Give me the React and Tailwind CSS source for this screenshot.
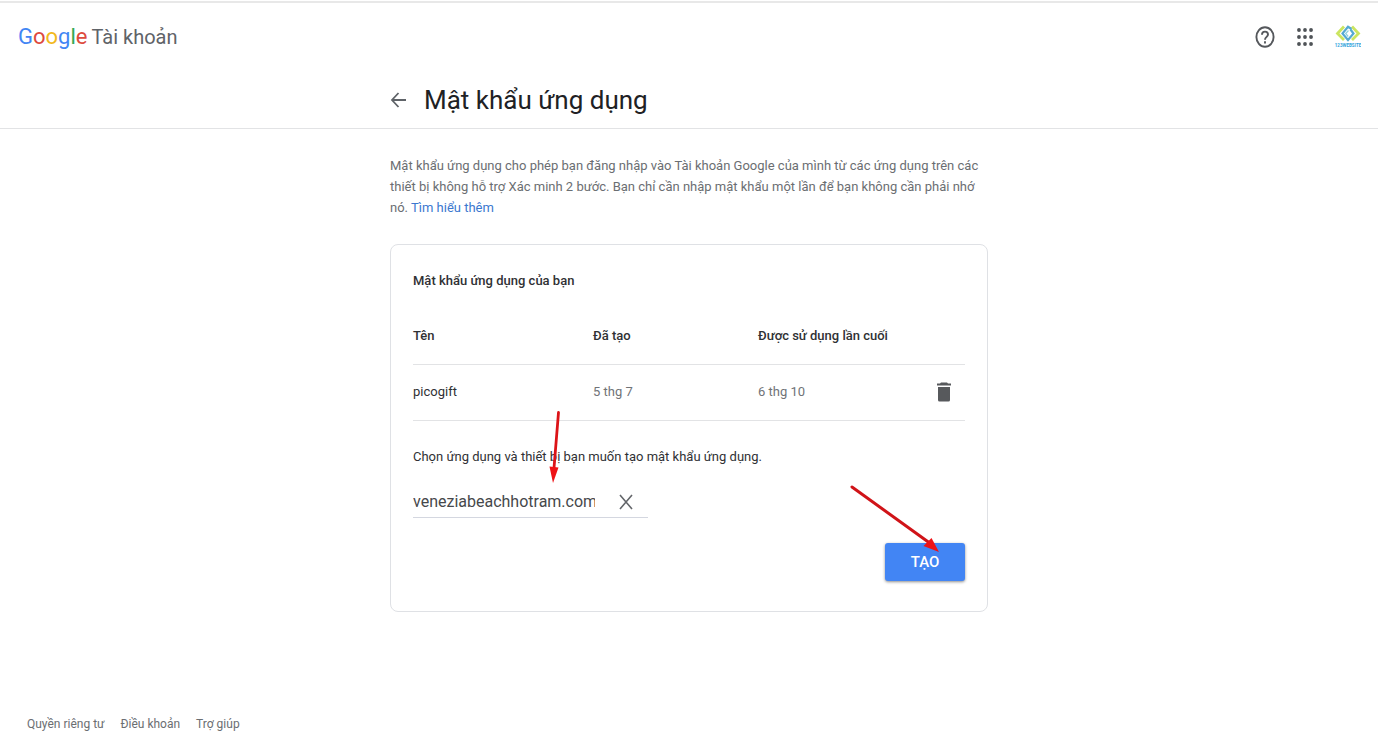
import { useState } from "react";

const passwords = [{ name: "picogift", created: "5 thg 7", lastUsed: "6 thg 10" }];

const dots = [3, 10, 17];

function HelpIcon() {
  return (
    <svg viewBox="0 0 20 22" className="h-[22px] w-5" fill="none" stroke="#55585c" strokeWidth="1.9">
      <ellipse cx="10" cy="11" rx="8.6" ry="9.8" />
      <path d="M7 8.8c0-2 1.3-3.2 3-3.2s3 1.2 3 2.9c0 2.3-3 2.5-3 5.2" />
      <path d="M10 15.2v2.2" />
    </svg>
  );
}

function AppsIcon() {
  return (
    <svg viewBox="0 0 20 20" className="h-5 w-5" fill="#4f5357">
      {dots.map((y) => dots.map((x) => <circle key={`${x}-${y}`} cx={x * 0.86 + 1.4} cy={y} r="1.9" />))}
    </svg>
  );
}

function AvatarLogo() {
  return (
    <svg viewBox="0 0 26 24" className="h-6 w-[26px]" fill="none">
      <path d="M9 1.500 2.500 8.500 9 15M17 1.500 23.500 8.500 17 15" stroke="#cbe560" strokeWidth="2.800" />
      <path d="M16.500 4 13 1.800 7.500 8.500 13 15l5.500-6.500-3-4" stroke="#55aad2" strokeWidth="2.200" />
      <path d="m13.500 5.500-2.800 3 2.500 3" stroke="#8ed0dd" strokeWidth="1.200" />
      <text x="13" y="21.500" textAnchor="middle" fontSize="4.500" fontWeight="700" fill="#35a5dc" fontFamily="Roboto, sans-serif">
        123WEBSITE
      </text>
    </svg>
  );
}

export default function App() {
  const [appName, setAppName] = useState("veneziabeachhotram.com");

  return (
    <div className="flex min-h-screen flex-col bg-white pt-px font-[Roboto,'Liberation_Sans',sans-serif] text-[13px] leading-5 text-[#303134]">
      {/* Header */}
      <header className="border-t-2 border-b border-t-[#e8e8e8] border-b-[#e2e3e5]">
        <div className="flex h-[68px] items-center justify-between pr-[17px] pl-[18px]">
          <a href="#" className="flex items-baseline gap-1">
            <span className="text-[22px]">
              <span className="text-[#4285f4]">G</span>
              <span className="text-[#dd4b3e]">o</span>
              <span className="text-[#f2b91d]">o</span>
              <span className="text-[#4285f4]">g</span>
              <span className="text-[#34a853]">l</span>
              <span className="text-[#dd4b3e]">e</span>
            </span>
            <span className="text-xl text-[#5f6368]">Tài khoản</span>
          </a>
          <div className="flex items-center gap-5">
            <button type="button" aria-label="Trợ giúp"><HelpIcon /></button>
            <button type="button" aria-label="Ứng dụng Google"><AppsIcon /></button>
            <button type="button" aria-label="Tài khoản"><AvatarLogo /></button>
          </div>
        </div>
        <div className="mx-auto flex h-[57px] max-w-[598px] items-center gap-4">
          <button type="button" aria-label="Quay lại">
            <svg viewBox="0 0 18 18" className="h-[18px] w-[18px]" fill="none" stroke="#5f6368" strokeWidth="1.8">
              <path d="M16 9H2M8.500 2 2 9l6.500 7" />
            </svg>
          </button>
          <h1 className="text-[26px] text-[#202124]">Mật khẩu ứng dụng</h1>
        </div>
      </header>

      {/* Main content */}
      <main className="mx-auto w-full max-w-[598px] pt-[26px]">
        <p className="leading-[21px] text-[#6b6e72]">
          Mật khẩu ứng dụng cho phép bạn đăng nhập vào Tài khoản Google của mình từ các ứng dụng trên các
          thiết bị không hỗ trợ Xác minh 2 bước. Bạn chỉ cần nhập mật khẩu một lần để bạn không cần phải nhớ
          nó. <a href="#" className="text-[#3b78cf]">Tìm hiểu thêm</a>
        </p>

        <section className="mt-[26px] rounded-lg border border-[#dfe1e5] px-[22px] pt-[26px] pb-[30px]">
          <h2 className="font-medium">Mật khẩu ứng dụng của bạn</h2>

          <table className="mt-[17px] w-full table-fixed text-left">
            <thead>
              <tr className="h-14 border-b border-[#e2e3e5]">
                <th className="w-[180px] font-medium">Tên</th>
                <th className="w-[165px] font-medium">Đã tạo</th>
                <th className="font-medium">Được sử dụng lần cuối</th>
                <th className="w-[42px]" />
              </tr>
            </thead>
            <tbody>
              {passwords.map((item) => (
                <tr key={item.name} className="h-14 border-b border-[#e2e3e5]">
                  <td>{item.name}</td>
                  <td className="text-[#707377]">{item.created}</td>
                  <td className="text-[#707377]">{item.lastUsed}</td>
                  <td>
                    <button type="button" aria-label="Xóa" className="mx-auto block">
                      <svg viewBox="0 0 14 20" className="h-5 w-[14px]" fill="#57595c">
                        <path d="M4 .5h6l1 1h3v2H0v-2h3zM1 5h12v13q0 1.500-1.500 1.500h-9Q1 19.500 1 18z" />
                      </svg>
                    </button>
                  </td>
                </tr>
              ))}
            </tbody>
          </table>

          <form onSubmit={(e) => e.preventDefault()}>
            <div className="relative mt-[26px]">
              <label htmlFor="app-name" className="block">
                Chọn ứng dụng và thiết bị bạn muốn tạo mật khẩu ứng dụng.
              </label>
              {/* Arrow pointing at the name field */}
              <svg viewBox="0 0 12 72" className="pointer-events-none absolute -top-9 left-[136px] h-[72px] w-3">
                <path d="M9.500 1.500 5 57" stroke="#dc1418" strokeWidth="2.800" strokeLinecap="round" />
                <path d="M.5 55.500 9.500 56.500 4 72z" fill="#ee1216" />
              </svg>
            </div>

            <div className="mt-5 flex h-[31px] w-[235px] items-center border-b border-[#d4d7e0]">
              <input
                id="app-name"
                value={appName}
                onChange={(e) => setAppName(e.target.value)}
                className="w-[182px] text-base text-[#46484b] outline-none"
              />
              <button type="button" aria-label="Xóa nội dung" className="ml-6" onClick={() => setAppName("")}>
                <svg viewBox="0 0 14 16" className="h-4 w-[14px]" fill="none" stroke="#63666a" strokeWidth="1.600">
                  <path d="m1 1 12 14M13 1 1 15" />
                </svg>
              </button>
            </div>

            <div className="mt-[25px] flex justify-end">
              <div className="relative">
                <button type="submit" className="h-[38px] w-20 rounded-[3px] bg-[#4285f4] text-[15px] font-medium text-white shadow-[0_1px_3px_rgba(0,0,0,0.45)]">
                  TẠO
                </button>
                {/* Arrow pointing at the submit button */}
                <svg viewBox="0 0 90 68" className="pointer-events-none absolute -top-[58px] -left-[35px] h-[68px] w-[90px]">
                  <path d="M2 2 79 57.500" stroke="#d01318" strokeWidth="3" strokeLinecap="round" />
                  <path d="M81.500 53 89 67 73.500 61z" fill="#ee1216" />
                </svg>
              </div>
            </div>
          </form>
        </section>
      </main>

      <footer className="mt-auto flex gap-4 px-[27px] pb-[17px] text-xs leading-5 text-[#6b6e72]">
        <a href="#">Quyền riêng tư</a>
        <a href="#">Điều khoản</a>
        <a href="#">Trợ giúp</a>
      </footer>
    </div>
  );
}
